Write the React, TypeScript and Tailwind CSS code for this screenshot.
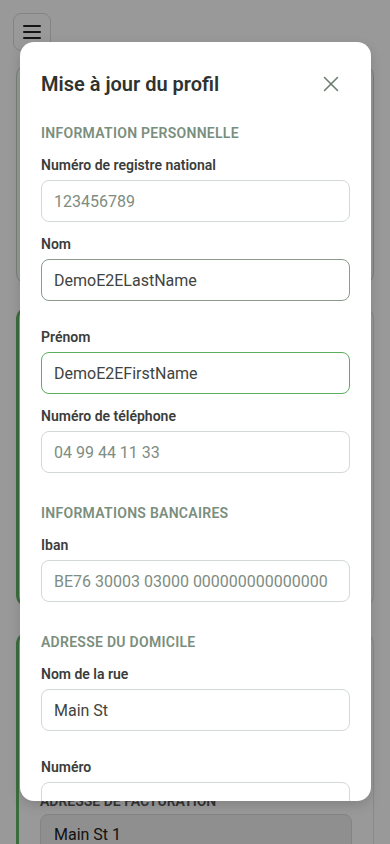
import React from "react";
import { X } from "lucide-react";

function Field({
  label,
  value,
  placeholder,
  border = "border-[#d3d9d4]",
  extra = false,
}: {
  label: string;
  value?: string;
  placeholder?: string;
  border?: string;
  extra?: boolean;
}) {
  return (
    <div className={`mt-[12px] flex flex-col ${extra ? "mb-[14px]" : ""}`}>
      <label className="text-[14px] leading-[20px] font-semibold text-[#3b3d3b]">{label}</label>
      <input
        readOnly
        value={value ?? ""}
        placeholder={placeholder}
        className={`mt-[5px] h-[42px] w-full rounded-[8px] border ${border} bg-white px-[12px] text-[16px] text-[#3f4440] outline-none placeholder:text-[#7e8c81]`}
      />
    </div>
  );
}

function Heading({ children, first = false }: { children: React.ReactNode; first?: boolean }) {
  return (
    <div
      className={`${first ? "mt-[25px]" : "mt-[15px]"} text-[14px] leading-[20px] font-semibold uppercase tracking-[0.02em] text-[#7a8e7d]`}
    >
      {children}
    </div>
  );
}

function Divider() {
  return <div className="mt-[15px] h-px w-full bg-[#e4e7e4]" />;
}

export default function App() {
  return (
    <div className="relative h-[844px] w-[390px] overflow-hidden bg-white font-['Roboto',sans-serif]">
      {/* background page */}
      <div className="flex flex-col px-4 pt-[13px]">
        <div className="-ml-[3px] flex h-[38px] w-[38px] flex-col items-center justify-center gap-[4px] rounded-[8px] border border-[#dcdcdc]">
          <span className="h-[2px] w-[18px] rounded bg-[#222]" />
          <span className="h-[2px] w-[18px] rounded bg-[#222]" />
          <span className="h-[2px] w-[18px] rounded bg-[#222]" />
        </div>
        <div className="mt-[13px] h-[221px] rounded-[12px] border border-[#c5d6c6]" />
        <div className="mt-[22px] h-[300px] rounded-[12px] border border-[#e4e4e4] border-l-[3px] border-l-[#63b866]" />
        <div className="mt-[25px] flex h-[260px] flex-col rounded-[12px] border border-[#e4e4e4] border-l-[3px] border-l-[#63b866] px-[21px]">
          <div className="mt-[158px] text-[14px] leading-[20px] font-semibold uppercase text-[#555]">
            Adresse de facturation
          </div>
          <div className="mt-[3px] flex h-[44px] items-start rounded-[8px] border border-[#dcdcdc] bg-[#eeeeee] px-[13px] pt-[10px] text-[16px] leading-[20px] text-[#222]">
            Main St 1
          </div>
        </div>
      </div>

      {/* overlay */}
      <div className="absolute inset-0 bg-black/40" />

      {/* modal */}
      <div className="absolute left-[20px] top-[42px] flex h-[759px] w-[351px] flex-col overflow-hidden rounded-[14px] bg-white px-[21px] pt-[28px] shadow-[0_4px_12px_rgba(0,0,0,0.15)]">
        <div className="flex items-center justify-between">
          <h2 className="text-[20px] leading-[28px] font-semibold text-[#2f332f]">Mise à jour du profil</h2>
          <X size={26} strokeWidth={1.4} className="mr-[6px] text-[#6b7e6e]" />
        </div>

        <Heading first>Information personnelle</Heading>
        <Field label="Numéro de registre national" placeholder="123456789" />
        <Field label="Nom" value="DemoE2ELastName" border="border-[#8a9b8c]" extra />
        <Field label="Prénom" value="DemoE2EFirstName" border="border-[#5aae5e]" />
        <Field label="Numéro de téléphone" placeholder="04 99 44 11 33" />
        <Divider />

        <Heading>Informations bancaires</Heading>
        <Field label="Iban" placeholder="BE76 30003 03000 000000000000000" />
        <Divider />

        <Heading>Adresse du domicile</Heading>
        <Field label="Nom de la rue" value="Main St" extra />
        <Field label="Numéro" />
      </div>
    </div>
  );
}
